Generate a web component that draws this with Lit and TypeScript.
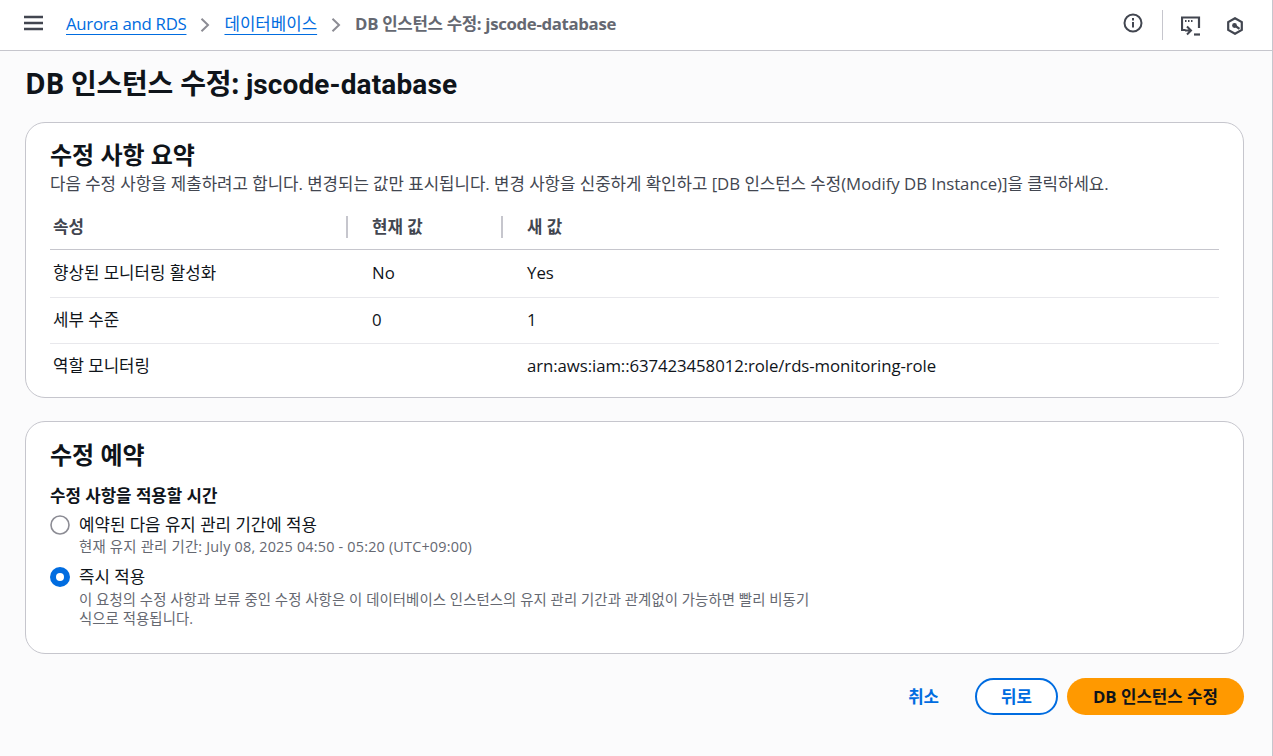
import { LitElement, html, css } from "lit";
import { customElement } from "lit/decorators.js";

@customElement("app-root")
export class AppRoot extends LitElement {
  static styles = css`
    :host { display: block; height: 756px; background: #fbfbfc; color: #0f141a; font-family: "Open Sans", "Noto Sans CJK KR", sans-serif; font-size: 16.8px; overflow: hidden; border-right: 1px solid #c6c6cd; box-sizing: border-box; }
    .top { height: 50px; background: #fff; border-bottom: 1px solid #c6c6cd; display: flex; align-items: center; padding: 0 28px 0 24px; }
    .menu { width: 19px; height: 16px; display: block; color: #424650; margin: 0 23px 4px 0; }
    .crumbs { display: flex; align-items: center; line-height: 24px; flex: 1; }
    .crumbs a { color: #006ce0; text-decoration: underline; text-underline-offset: 4px; margin-bottom: 2px; }
    .bc-l { letter-spacing: -0.28px; }
    .chev { width: 10px; height: 14px; color: #8c8c94; margin: 0 14px; }
    .cur { color: #656871; font-weight: 700; margin-bottom: 2px; letter-spacing: -0.33px; }
    .ticons { display: flex; align-items: center; color: #424650; }
    .info { width: 20px; height: 20px; display: block; margin-bottom: 5px; }
    .sep { width: 1px; height: 30px; background: #c6c6cd; margin: 0 18px 0 19px; }
    .term { width: 20px; height: 20px; display: block; margin-top: 2px; }
    .hex { width: 18px; height: 18px; display: block; margin: 1px 0 0 25px; }
    main { padding: 0 28px 0 25px; }
    h1 { margin: 0; font-size: 28px; line-height: 36px; font-weight: 700; padding: 14px 0 19px; letter-spacing: -0.25px; }
    .narrow { font-family: Roboto, "Noto Sans CJK KR", sans-serif; letter-spacing: 0.12px; }
    .card { background: #fff; border: 1px solid #c6c6cd; border-radius: 20px; padding: 16px 24px 8px; margin-bottom: 23px; }
    h2 { margin: 0; font-size: 24px; line-height: 32px; font-weight: 700; }
    .desc { line-height: 26px; color: #424650; letter-spacing: -0.03px; }
    .tbl { width: 100%; border-collapse: collapse; margin-top: 8px; }
    .tbl col.c1 { width: 296px; }
    .tbl col.c2 { width: 155px; }
    th { text-align: left; font-weight: 700; color: #424650; height: 44px; padding: 0; border-bottom: 1px solid #c6c6cd; }
    th > div { padding-left: 24px; border-left: 2px solid #c6c6cd; line-height: 22px; }
    th:first-child > div { border-left: 0; padding-left: 3px; }
    td { padding: 10px 0 0 26px; height: 46px; box-sizing: border-box; vertical-align: top; line-height: 24px; border-bottom: 1px solid #e8e8ec; }
    td:first-child { padding-left: 3px; }
    tr:first-child td { height: 48px; padding-top: 11px; }
    tr:last-child td { border-bottom: 0; height: 45px; padding-top: 10px; }
    .arn { letter-spacing: -0.08px; }
    .card.b { padding: 17px 24px 16px; margin-bottom: 24px; }
    .label { font-weight: 700; line-height: 24px; margin: 13px 0 5px; }
    .opt { display: flex; gap: 9px; margin-bottom: 8px; }
    .radio { width: 20px; height: 20px; flex: none; margin-top: 2px; display: block; }
    .t { line-height: 24px; }
    .s { font-size: 14.4px; line-height: 19.5px; color: #656871; max-width: 736px; letter-spacing: 0.07px; margin-top: 1px; }
    .wide { letter-spacing: 0.2px; line-height: 20px; margin-top: 0; }
    .actions { display: flex; justify-content: flex-end; align-items: center; gap: 9px; }
    .btn { font-family: inherit; font-size: 16.8px; font-weight: 700; height: 37px; border-radius: 19px; padding: 0 26px; box-sizing: border-box; background: none; border: 0; color: #006ce0; display: flex; align-items: center; }
    .cancel { margin-right: 1px; }
    .back { border: 2px solid #006ce0; background: #fff; padding: 0 24px; }
    .primary { background: #ff9900; color: #0f141a; }
  `;

  render() {
    const chev = html`<svg class="chev" viewBox="0 0 10 14" fill="none" stroke="currentColor" stroke-width="2"><path d="M1.500 .8 8 7l-6.500 6.200"/></svg>`;
    return html`
      <header class="top">
        <svg class="menu" viewBox="0 0 19 16" fill="none" stroke="currentColor" stroke-width="2.400"><path d="M0 2h19M0 8h19M0 14h19"/></svg>
        <nav class="crumbs">
          <a class="bc-l">Aurora and RDS</a>${chev}<a>데이터베이스</a>${chev}<span class="cur">DB 인스턴스 수정: jscode-database</span>
        </nav>
        <div class="ticons">
          <svg class="info" viewBox="0 0 20 20" fill="none" stroke="currentColor" stroke-width="2"><circle cx="10" cy="10" r="8.500"/><path d="M10 9v5.500M10 5v2.400"/></svg>
          <div class="sep"></div>
          <svg class="term" viewBox="0 0 20 20" fill="none" stroke="currentColor" stroke-width="2.200"><path d="M4.500 14H1V1.500h17V12"/><path d="M4 5h1.500M7 5h1.500M10 5h1.500" stroke-width="1.800"/><path d="M6 10.500l4 4-4 4M10 14.500H4" stroke-width="2"/><path d="M13 18.500h6"/></svg>
          <svg class="hex" viewBox="0 0 18 18" fill="none" stroke="currentColor" stroke-width="2.200"><path d="M9 1.200l6.800 3.900v7.800L9 16.800l-6.800-3.900V5.100z"/><circle cx="8.500" cy="8.500" r="2.400" fill="currentColor" stroke="none"/><path d="M9.500 9l4 2.800"/></svg>
        </div>
      </header>
      <main>
        <h1>DB 인스턴스 수정: <span class="narrow">jscode-database</span></h1>
        <section class="card">
          <h2>수정 사항 요약</h2>
          <div class="desc">다음 수정 사항을 제출하려고 합니다. 변경되는 값만 표시됩니다. 변경 사항을 신중하게 확인하고 [DB 인스턴스 수정(Modify DB Instance)]을 클릭하세요.</div>
          <table class="tbl">
            <colgroup><col class="c1"/><col class="c2"/><col/></colgroup>
            <thead><tr><th><div>속성</div></th><th><div>현재 값</div></th><th><div>새 값</div></th></tr></thead>
            <tbody>
              <tr><td>향상된 모니터링 활성화</td><td>No</td><td>Yes</td></tr>
              <tr><td>세부 수준</td><td>0</td><td>1</td></tr>
              <tr><td>역할 모니터링</td><td></td><td class="arn">arn:aws:iam::637423458012:role/rds-monitoring-role</td></tr>
            </tbody>
          </table>
        </section>
        <section class="card b">
          <h2>수정 예약</h2>
          <div class="label">수정 사항을 적용할 시간</div>
          <div class="opt">
            <svg class="radio" viewBox="0 0 20 20"><circle cx="10" cy="10" r="9" fill="#fff" stroke="#8c8c94" stroke-width="1.600"/></svg>
            <div><div class="t">예약된 다음 유지 관리 기간에 적용</div><div class="s wide">현재 유지 관리 기간: July 08, 2025 04:50 - 05:20 (UTC+09:00)</div></div>
          </div>
          <div class="opt">
            <svg class="radio" viewBox="0 0 20 20"><circle cx="10" cy="10" r="10" fill="#006ce0"/><circle cx="10" cy="10" r="4" fill="#fff"/></svg>
            <div><div class="t">즉시 적용</div><div class="s">이 요청의 수정 사항과 보류 중인 수정 사항은 이 데이터베이스 인스턴스의 유지 관리 기간과 관계없이 가능하면 빨리 비동기식으로 적용됩니다.</div></div>
          </div>
        </section>
        <div class="actions">
          <button class="btn cancel">취소</button>
          <button class="btn back">뒤로</button>
          <button class="btn primary">DB 인스턴스 수정</button>
        </div>
      </main>
    `;
  }
}
